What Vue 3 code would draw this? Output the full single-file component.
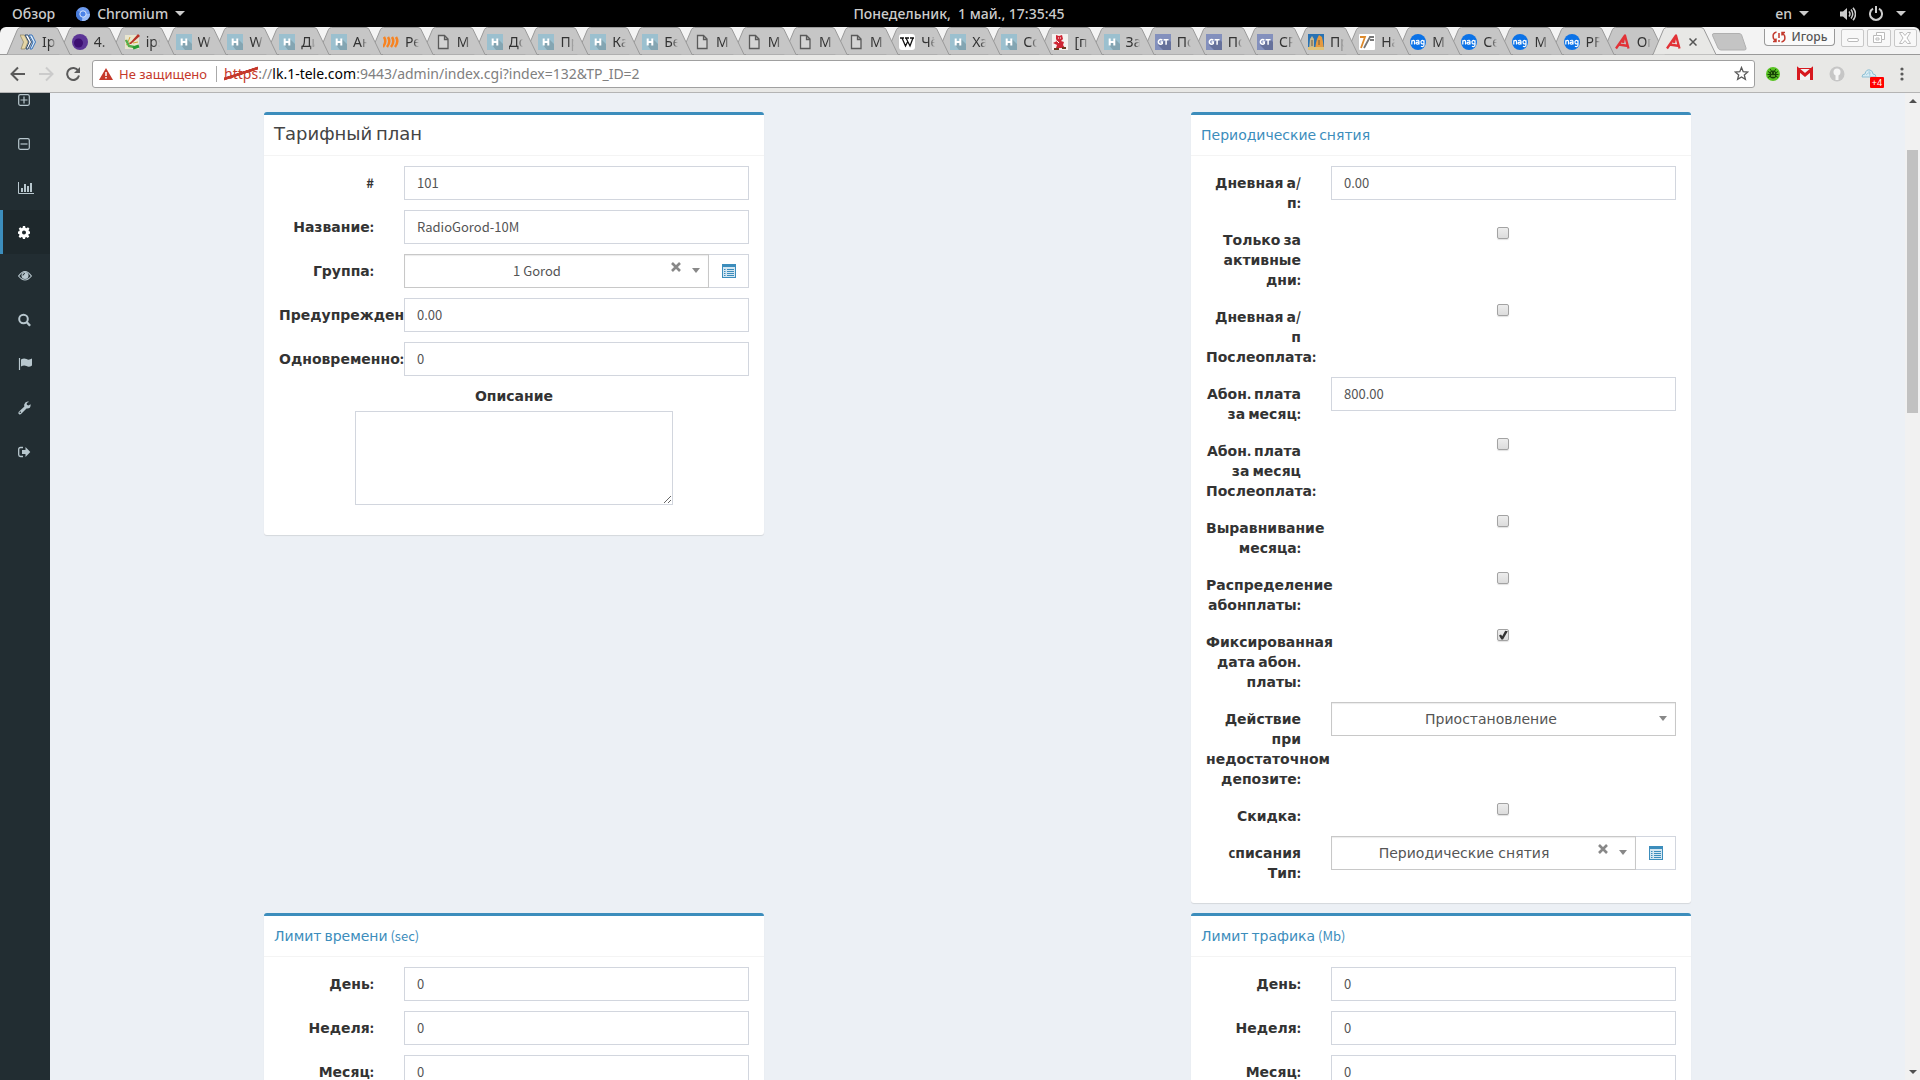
<script setup>
import { h } from 'vue'

/* Splits a string into Cyrillic and other runs: the two scripts use different families. */
const Mixed = (props) =>
  (props.text.match(/[\u0400-\u04ff]+|[^\u0400-\u04ff]+/g) || []).map((run) =>
    /[\u0400-\u04ff]/.test(run) ? run : h('span', { class: 'latin' }, run)
  )
Mixed.props = ['text']

const H = { icon: 'h' }
const tabs = [
  { icon: 'books', title: 'Ipt' }, { icon: 'orb', title: '4.' }, { icon: 'pen', title: 'ips' },
  { ...H, title: 'W' }, { ...H, title: 'W' }, { ...H, title: 'Ди' }, { ...H, title: 'Ан' },
  { icon: 'waves', title: 'Ре' }, { icon: 'doc', title: 'M' }, { ...H, title: 'До' },
  { ...H, title: 'Пр' }, { ...H, title: 'Ка' }, { ...H, title: 'Бе' },
  { icon: 'doc', title: 'M' }, { icon: 'doc', title: 'M' }, { icon: 'doc', title: 'M' }, { icon: 'doc', title: 'M' },
  { icon: 'wiki', title: 'Чё' }, { ...H, title: 'Ха' }, { ...H, title: 'Со' },
  { icon: 'devil', title: '[п' }, { ...H, title: 'За' },
  { icon: 'gt', title: 'По' }, { icon: 'gt', title: 'По' }, { icon: 'gt', title: 'СР' },
  { icon: 'castle', title: 'Пр' }, { icon: 'seven', title: 'На' },
  { icon: 'nag', title: 'M' }, { icon: 'nag', title: 'Се' }, { icon: 'nag', title: 'M' }, { icon: 'nag', title: 'PF' },
  { icon: 'abills', title: 'Оп' }, { icon: 'abills', title: '', active: true }
]

const favicons = {
  h: '<rect width="16" height="16" fill="#9bc0cf"/><path d="M5 11l6-6 5 5v6H9z" fill="#84a5b2"/><path d="M5.700 4.500v7M10.300 4.500v7M5.700 8h4.600" stroke="#fff" stroke-width="2" fill="none"/>',
  gt: '<rect width="16" height="16" fill="#8390bd"/><path d="M3 11l10-6 3 3v8H8z" fill="#66719b"/><path d="M7.300 6.300A2.300 2.300 0 1 0 7.300 9.500V8.100H5.600M8.600 5.800h5M11.100 5.800v5" stroke="#fff" stroke-width="1.500" fill="none"/>',
  doc: '<path d="M3.500 1.500h6l3.500 3.500v9.500h-9.500zM9.500 1.500v4h3.500" fill="#d4d4d4" stroke="#5a5a5a" stroke-width="1.300"/>',
  orb: '<circle cx="8" cy="8" r="8" fill="#5c3596"/><circle cx="6.500" cy="9" r="4.500" fill="#3d0f72"/>',
  books: '<path d="M0 1h4.500l3.500 7-3 7H1l2.500-7z" fill="#e5d6a6" stroke="#7c7251" stroke-width=".6"/><path d="M5 1h3l3.500 7-3.500 7H6l3-7z" fill="#fff" stroke="#2f4a6b"/><path d="M9 1h3l3.500 7-3.500 7h-2l3-7z" fill="#dceaf8" stroke="#3671b8"/>',
  pen: '<path d="M1 1h14v14H1z" fill="#e9e6cf"/><path d="M1 6l3 2 2-5M2 11l5-3M9 9l5-1" stroke="#d5a437" fill="none"/><path d="M2 6l3 6 5 1" stroke="#58ad4c" stroke-width="2.400" fill="none"/><path d="M5 10l9-10 2 2-9 8z" fill="#b83227"/><path d="M9 14l6-2" stroke="#279b33" stroke-width="3"/>',
  waves: '<path d="M1 3q3 5-1 10M5 3q3 5-1 10M9 3q3 5-1 10M13 3q3 5-1 10" stroke="#f78321" stroke-width="2.500" fill="none"/>',
  wiki: '<rect width="16" height="16" rx="3" fill="#fff"/><path d="M1 4h4M6 4h4M11 4h4M3 4l3.500 8L9 7M7 4l4 8 3-8" stroke="#111" stroke-width="1.300" fill="none"/>',
  devil: '<rect width="16" height="16" fill="#f4f1ef"/><path d="M4 1l3 1 3-1 1 4-2 2 3 1-1 3 2 3H4l1-3-4-2 4-2-1-2z" fill="#cf2634"/><path d="M2 14h5v2H2zM10 13h4v2h-4z" fill="#6c3b21"/><path d="M6 4h1M8 4h1M5 7l2 2" stroke="#fff"/>',
  castle: '<rect width="16" height="16" fill="#2872b4"/><path d="M2 5l2-3 2 3v10H1z" fill="#c6b891"/><path d="M9 5l2-4 3 2 1 5 1 8H7l1-7z" fill="#e59a3f"/><path d="M0 13h16v3H0z" fill="#dfc27a"/><path d="M4 6v6M11 6v5" stroke="#6b5b45"/>',
  seven: '<rect width="16" height="16" rx="1" fill="#fff"/><path d="M1 3h5L2 14" stroke="#dd8a2c" stroke-width="1.800" fill="none"/><path d="M15 3h-4L5 14M15 6h-4" stroke="#777" stroke-width="1.800" fill="none"/>',
  nag: '<circle cx="8" cy="8" r="8" fill="#0b72e7"/><path d="M1.800 10.500V6.300M1.800 7.500Q3.200 5.400 4.500 7v3.500M6 6.700Q9 5.400 9 7.700v2.800M9 8.200q-3-.2-3 1.200 1.500 1.800 3-.2M14 6.200v5Q13.500 13.200 10.900 12.200M14 7.500Q12 5.200 11 7.600 10.800 10.800 14 9.600" stroke="#fff" stroke-width="1.200" fill="none"/>',
  abills: '<path d="M1 14.500L10 1.500l3.500 13M3.500 10.500l10 1.500M9 3.500L8 9" stroke="#e23237" stroke-width="2.300" fill="none" stroke-linejoin="round"/>'
}

const menu = [
  { name: 'Добавить', art: '<rect x=".7" y="3.700" width="10.600" height="10.600" rx="1.500" fill="none" stroke="currentColor" stroke-width="1.200"/><path d="M2.500 9h7M6 5.500v7" stroke="currentColor" stroke-width="1.200"/>' },
  { name: 'Свернуть', art: '<rect x=".7" y="3.700" width="10.600" height="10.600" rx="1.500" fill="none" stroke="currentColor" stroke-width="1.200"/><path d="M2.500 9h7" stroke="currentColor" stroke-width="1.200"/>' },
  { name: 'Отчёты', art: '<path d="M.5 3v11.500H16" fill="none" stroke="currentColor"/><path d="M3 9h2v4H3zM6 5h2v8H6zM9 7h2v6H9zM12 4h2v9h-2z" fill="currentColor"/>' },
  { name: 'Настройка', active: true, art: '<path fill-rule="evenodd" fill="currentColor" d="M4.900 3h2.200l.3 1.700 1.100.5 1.500-1 1.500 1.600-1 1.400.5 1.100 1 .2v2.200l-1.300.3-.4 1.100 1 1.400-1.600 1.500-1.400-1-1 .4-.3 1.600H4.900l-.3-1.600-1.100-.4-1.400 1-1.500-1.600.9-1.300-.4-1.100L0 10.700V8.500l1.300-.3.4-1.100-1-1.400 1.500-1.500 1.500 1 .9-.4zM6 7.500a2 2 0 1 0 0 4 2 2 0 0 0 0-4z"/>' },
  { name: 'Мониторинг', art: '<path d="M.6 9Q7 0 13.400 9 7 17 .6 9z" fill="none" stroke="currentColor" stroke-width="1.200"/><circle cx="7" cy="8.500" r="3.500" fill="currentColor"/><path d="M5 8.500q0-2 2-2" stroke="#222d32" fill="none"/>' },
  { name: 'Поиск', art: '<circle cx="5.500" cy="8" r="4.300" fill="none" stroke="currentColor" stroke-width="2"/><path d="M8.800 11.300l3.300 3.500" stroke="currentColor" stroke-width="2.400"/>' },
  { name: 'Отметки', art: '<path d="M1.500 3v12" stroke="currentColor" stroke-width="1.200"/><path d="M3 4.500q3-2 5.500-.4 2.500 1.300 5.500-.6v7q-3 2-5.500.6-2.500-1.600-5.500.4z" fill="currentColor"/>' },
  { name: 'Инструменты', art: '<path d="M12.600 5.300l-2.200 1.300-1.600-.9V4l2.300-1.300Q7.500 1.800 6.300 5.200q-.3 1.300.1 2.300L.8 12.700q-1 1.500.3 2.500 1.200.6 2.200-.4l5.200-5.300q4.500.4 4.100-4.200zM2.300 14a.8.8 0 1 1 0-1.600.8.8 0 0 1 0 1.600z" fill="currentColor"/>' },
  { name: 'Выход', art: '<path d="M5 4.500H2.500Q.7 4.500.7 6.200v5.600q0 1.700 1.800 1.700H5" fill="none" stroke="currentColor" stroke-width="1.300"/><path d="M4 7h3.500V4L12.300 9l-4.800 5v-3H4z" fill="currentColor"/>' }
]

const tariff = [
  { id: 'tp-id', label: '#', type: 'text', value: '101' },
  { id: 'tp-name', label: 'Название:', type: 'text', value: 'RadioGorod-10M' },
  { id: 'tp-group', label: 'Группа:', type: 'select', value: '1 Gorod', latin: true, group: true },
  { id: 'tp-alert', label: 'Предупрежден', type: 'text', value: '0.00' },
  { id: 'tp-sim', label: 'Одновременно:', type: 'text', value: '0' }
]
const periodic = [
  { id: 'day-fee', label: 'Дневная а/п:', type: 'text', value: '0.00' },
  { id: 'active-day', label: 'Только за активные дни:', type: 'check' },
  { id: 'day-post', label: 'Дневная а/п Послеоплата:', type: 'check' },
  { id: 'month-fee', label: 'Абон. плата за месяц:', type: 'text', value: '800.00' },
  { id: 'month-post', label: 'Абон. плата за месяц Послеоплата:', type: 'check' },
  { id: 'month-align', label: 'Выравнивание месяца:', type: 'check' },
  { id: 'fee-split', label: 'Распределение абонплаты:', type: 'check' },
  { id: 'fixed-day', label: 'Фиксированная дата абон. платы:', type: 'check', checked: true },
  { id: 'small-deposit', label: 'Действие при недостаточном депозите:', type: 'select', value: 'Приостановление' },
  { id: 'reduction', label: 'Скидка:', type: 'check' },
  { id: 'fee-type', label: 'cписания Тип:', type: 'select', value: 'Периодические снятия', group: true }
]
const limits = (prefix) => [
  { id: prefix + '-day', label: 'День:', type: 'text', value: '0' },
  { id: prefix + '-week', label: 'Неделя:', type: 'text', value: '0' },
  { id: prefix + '-month', label: 'Месяц:', type: 'text', value: '0' }
]
const cards = [
  { title: 'Тарифный план', plain: true, fields: tariff, note: true, side: 'left' },
  { title: 'Периодические снятия', fields: periodic, side: 'right' },
  { title: 'Лимит времени (sec)', fields: limits('time'), side: 'left' },
  { title: 'Лимит трафика (Mb)', fields: limits('traffic'), side: 'right' }
]
</script>

<template>
  <div class="desktop">
    <header class="panel">
      <div class="panel-side">
        <span>Обзор</span>
        <span class="app-menu">
          <svg width="14" height="14" viewBox="0 0 14 14"><circle cx="7" cy="7" r="7" fill="#6d9bf0" /><path d="M7 7L1 3.500A7 7 0 0 0 6 14z" fill="#4579d8" /><path d="M7 7h7a7 7 0 0 1-8 7z" fill="#9cbdf8" /><circle cx="7" cy="7" r="3.200" fill="#4c83e8" stroke="#dbe7fd" /></svg>
          Chromium <i class="caret"></i>
        </span>
      </div>
      <time>Понедельник, &nbsp;1 май., 17:35:45</time>
      <div class="panel-side panel-right">
        <span class="lang">en <i class="caret"></i></span>
        <svg width="16" height="14" viewBox="0 0 16 14"><path d="M0 4.500h3L7 1v12L3 9.500H0z" fill="#ccc" /><path d="M9 4.500q2 2.500 0 5M11 2.500q3.500 4.500 0 9M13 .7q5 6.300 0 12.600" fill="none" stroke="#ccc" stroke-width="1.500" /></svg>
        <svg class="power" width="14" height="15" viewBox="0 0 14 15"><path d="M4 2.700A6 6 0 1 0 10 2.700M7 0v7" fill="none" stroke="#ccc" stroke-width="2" /></svg>
        <i class="caret"></i>
      </div>
    </header>

    <div class="strip">
      <div class="tabs">
        <div v-for="(t, i) in tabs" :key="i" class="tab" :class="{ active: t.active }" :style="{ zIndex: t.active ? 50 : 40 - i }">
          <svg class="shape" width="66" height="28" viewBox="0 0 66 28">
            <path d="M0 27.500L1 27.500 11.500 2.500Q12.500.5 14.500.5H49Q51 .5 52 2.500L64 27.500H66" />
          </svg>
          <svg class="fav" width="16" height="16" viewBox="0 0 16 16" v-html="favicons[t.icon]"></svg>
          <button v-if="t.active" class="tab-close" aria-label="Закрыть">
            <svg width="8" height="8" viewBox="0 0 8 8"><path d="M.5.5l7 7M7.500.5l-7 7" stroke="#555" stroke-width="1.500" /></svg>
          </button>
          <span v-else class="tab-title">{{ t.title }}</span>
        </div>
      </div>
      <div class="window-tools">
        <svg class="new-tab" width="36" height="18" viewBox="0 0 36 18"><path d="M3 .5h25q2 0 2.600 1.500L35 15q.5 2-1.500 2H10q-2 0-3-2L1.500 2.500Q1 .5 3 .5z" fill="#c4c4c4" stroke="#b0b0b0" /></svg>
        <button class="user">
          <svg width="14" height="12" viewBox="0 0 14 12"><path d="M4.500 1Q0 2 1.500 7.500L4 10.500M1 10.500h3V7.500M9.500 11q4.500-1 3-6.500L10 1.500M13 1.500h-3v3M7 2v5M7 9v2" fill="none" stroke="#c33a2e" stroke-width="1.500" /></svg>
          Игорь
        </button>
        <button class="win" aria-label="Свернуть"><svg width="12" height="12" viewBox="0 0 12 12"><rect x=".5" y="6.500" width="11" height="3" rx="1.500" /></svg></button>
        <button class="win" aria-label="Восстановить"><svg width="12" height="12" viewBox="0 0 12 12"><path d="M3.500.5h8v7h-3v3h-8v-7h3zM3.500 3.500h5v4M3 6h3v2H3z" /></svg></button>
        <button class="win" aria-label="Закрыть"><svg width="12" height="12" viewBox="0 0 12 12"><path d="M.5.5h3L6 3.500 8.500.5h3L8 6l3.500 5.500h-3L6 8.500l-2.500 3h-3L4 6z" /></svg></button>
      </div>
    </div>

    <div class="toolbar">
      <button class="nav" aria-label="Назад"><svg width="16" height="16" viewBox="0 0 16 16"><path d="M15 8H2M8 1.500L1.500 8 8 14.500" fill="none" stroke="#5a5a5a" stroke-width="2" /></svg></button>
      <button class="nav" aria-label="Вперёд"><svg width="16" height="16" viewBox="0 0 16 16"><path d="M1 8h13M8 1.500L14.500 8 8 14.500" fill="none" stroke="#cbcbcb" stroke-width="2" /></svg></button>
      <button class="nav" aria-label="Обновить"><svg width="14" height="16" viewBox="1 0 14 16"><path d="M13.300 4.800A6 6 0 1 0 14 9.500" fill="none" stroke="#5a5a5a" stroke-width="2" /><path d="M15 1v6H9z" fill="#5a5a5a" /></svg></button>
      <div class="omnibox">
        <svg width="14" height="12" viewBox="0 0 14 12"><path d="M7 0l7 12H0z" fill="#c5392b" /><path d="M7 4v4M7 9v1.500" stroke="#fff" stroke-width="1.500" /></svg>
        <span class="warn">Не защищено</span>
        <span class="url"><span class="scheme">https</span>://<b>lk.1-tele.com</b>:9443/admin/index.cgi?index=132&amp;TP_ID=2</span>
        <svg class="star" width="15" height="15" viewBox="0 0 15 15"><path d="M7.500 1.500l1.700 4.200 4.600.3-3.500 2.900 1.100 4.500-3.900-2.500-3.900 2.500 1.100-4.500L1.200 6l4.600-.3z" fill="none" stroke="#5a5a5a" stroke-width="1.300" /></svg>
      </div>
      <div class="extensions">
        <svg width="16" height="16" viewBox="0 0 16 16"><circle cx="8" cy="8" r="7" fill="#57c322" /><ellipse cx="8" cy="8.500" rx="3.500" ry="4" fill="#164306" /><path d="M3 5.500l10 6M3 11.500l10-6M2.500 8.500h11M5 3l1.500 2M11 3L9.500 5" stroke="#164306" /><path d="M6 7h1M9 7h1M6 10h4" stroke="#8bea44" /></svg>
        <svg width="16" height="16" viewBox="0 0 16 16"><path d="M0 2h16v12H0z" fill="#f2f2f2" /><path d="M0 2h16v1H0z" fill="#d7191f" /><path d="M1.500 14V3.500L8 9l6.500-5.500V14" fill="none" stroke="#d7191f" stroke-width="3" /></svg>
        <svg width="16" height="16" viewBox="0 0 16 16"><circle cx="8" cy="8" r="7.500" fill="#c6c6c6" /><circle cx="8" cy="6" r="3.500" fill="#f5f5f5" /><path d="M6.500 8h3v6h-3z" fill="#f5f5f5" /></svg>
        <span class="cloud">
          <svg width="16" height="16" viewBox="0 0 16 16"><path d="M1 11q0-3 3-3 1-5 5-4 3 1 3 4 3 0 3 3z" fill="#d7ecf5" stroke="#8fbfd3" /><path d="M5 9q2-3 5-2M8 5l1 5" stroke="#a6cfe0" fill="none" /></svg>
          <span class="badge">+4</span>
        </span>
        <svg width="4" height="14" viewBox="0 0 4 14" fill="#5a5a5a"><circle cx="2" cy="2" r="1.600" /><circle cx="2" cy="7" r="1.600" /><circle cx="2" cy="12" r="1.600" /></svg>
      </div>
    </div>

    <div class="page">
      <nav class="sidebar">
        <ul>
          <li v-for="m in menu" :key="m.name" :class="{ active: m.active }">
            <a href="#" :aria-label="m.name"><svg width="16" height="18" viewBox="0 0 16 18" v-html="m.art"></svg></a>
          </li>
        </ul>
      </nav>

      <main class="content">
        <form class="board" @submit.prevent>
          <section v-for="c in cards" :key="c.title" class="card" :class="c.side">
            <h3 v-if="c.plain" class="card-head"><Mixed :text="c.title" /></h3>
            <h3 v-else class="card-head link"><a href="#"><Mixed :text="c.title" /></a></h3>
            <div class="card-body">
              <div v-for="f in c.fields" :key="f.id" class="row">
                <label :for="f.id"><Mixed :text="f.label" /></label>
                <input v-if="f.type === 'text'" :id="f.id" class="control" type="text" :value="f.value" />
                <input v-else-if="f.type === 'check'" :id="f.id" class="tick" type="checkbox" :checked="f.checked" />
                <div v-else class="chooser" :class="{ grouped: f.group }">
                  <div class="select-box">
                    <select :id="f.id" :class="{ small: f.latin }"><option>{{ f.value }}</option></select>
                    <svg v-if="f.group" class="clear" width="10" height="10" viewBox="0 0 10 10"><path d="M1 1l8 8M9 1L1 9" stroke="#888" stroke-width="2.600" /></svg>
                    <i class="arrow"></i>
                  </div>
                  <button v-if="f.group" class="list" type="button" aria-label="Список">
                    <svg width="14" height="14" viewBox="0 0 14 14"><rect x=".5" y=".5" width="13" height="13" fill="#d5e7f2" stroke="#3c8dbc" /><path d="M0 0h14v3H0z" fill="#3c8dbc" /><path d="M2 5.500h1.500M2 7.500h1.500M2 9.500h1.500M2 11.500h1.500M5 5.500h7M5 7.500h7M5 9.500h7M5 11.500h7" stroke="#3c8dbc" /></svg>
                  </button>
                </div>
              </div>
              <div v-if="c.note" class="note">
                <label for="comments">Описание</label>
                <textarea id="comments"></textarea>
              </div>
            </div>
          </section>
        </form>
      </main>

      <div class="scrollbar">
        <i class="up"></i>
        <div class="track"><div class="thumb"></div></div>
        <i class="down"></i>
      </div>
    </div>
  </div>
</template>

<style>
body {
  margin: 0;
}
.latin {
  font-family: "Noto Sans CJK SC", sans-serif;
  font-size: 13px;
  line-height: 0;
}
h3 > .latin {
  font-size: 17px;
}
</style>

<style scoped>
* {
  box-sizing: border-box;
}
button {
  padding: 0;
  border: 0;
  background: none;
  font: inherit;
}
svg {
  display: block;
  flex: none;
}
.desktop {
  display: flex;
  flex-direction: column;
  height: 100vh;
  overflow: hidden;
  background: #000;
  font-family: "Noto Sans", sans-serif;
}

/* system panel */
.panel {
  display: flex;
  flex: none;
  align-items: center;
  height: 27px;
  padding: 0 14px 0 12px;
  color: #ccc;
  font-size: 14px;
  font-weight: 500;
  line-height: 20px;
}
.panel-side {
  display: flex;
  flex: 1;
  align-items: center;
  gap: 21px;
}
.panel-right {
  justify-content: flex-end;
  gap: 13px;
}
.app-menu,
.lang {
  display: flex;
  align-items: center;
  gap: 7px;
}
.lang {
  margin-right: 18px;
}
.caret {
  border: 5px solid transparent;
  border-top-color: #ccc;
  border-bottom: 0;
}

/* tab strip */
.strip {
  display: flex;
  flex: none;
  height: 28px;
  padding-left: 6px;
  border-radius: 6px 6px 0 0;
  background: #f3f3f3;
  box-shadow: inset 0 -1px #999;
}
.tabs {
  display: flex;
  flex: 1;
  min-width: 0;
}
.tab {
  position: relative;
  display: flex;
  flex: 51 1 0;
  min-width: 0;
  padding: 7px 0 0 14px;
}
.tab:nth-child(-n + 14) {
  flex-grow: 52;
}
.tab > * {
  flex: none;
}
.shape {
  position: absolute;
  top: 0;
  left: 0;
}
.shape path {
  fill: #c6c6c6;
  stroke: #999;
}
.active .shape path {
  fill: #e8e8e6;
}
.fav {
  position: relative;
}
.tab-title {
  position: relative;
  width: 14px;
  height: 20px;
  margin: -2px 0 0 6px;
  overflow: hidden;
  color: #333;
  font-size: 14px;
  line-height: 20px;
  white-space: nowrap;
  mask-image: linear-gradient(90deg, #000 60%, transparent);
}
.tab-close {
  position: relative;
  height: 16px;
  margin-left: 7px;
}
.window-tools {
  display: flex;
  flex: none;
  align-items: flex-start;
  width: 217px;
  padding: 2px 3px 0 8px;
  gap: 3px;
}
.new-tab {
  margin: 4px 14px 0 0;
}
.user {
  display: flex;
  align-items: center;
  justify-content: center;
  gap: 6px;
  width: 71px;
  height: 17px;
  margin-right: 3px;
  border: 1px solid #999;
  border-top: 0;
  border-radius: 0 0 4px 4px;
  background: #fafafa;
  color: #555;
  font-size: 12px;
  font-weight: 500;
  line-height: 16px;
}
.win {
  display: flex;
  flex: 1;
  align-items: center;
  justify-content: center;
  height: 18px;
  border: 1px solid #c8c8c8;
  border-radius: 2px;
  background: #f8f8f8;
}
.win svg {
  fill: #fff;
  stroke: #bbb;
}

/* toolbar */
.toolbar {
  display: flex;
  flex: none;
  align-items: center;
  height: 38px;
  padding: 0 16px 0 10px;
  border-bottom: 1px solid #b4b4b4;
  background: #e8e8e6;
}
.nav {
  margin-right: 12px;
}
.omnibox {
  display: flex;
  flex: 1;
  align-items: center;
  height: 28px;
  margin-right: 10px;
  padding: 0 5px 0 6px;
  border: 1px solid #a0a0a0;
  border-radius: 3px;
  background: #fff;
  font-size: 14px;
  line-height: 20px;
}
.warn {
  margin: 0 7px 0 6px;
  padding-right: 9px;
  border-right: 1px solid #aaa;
  color: #c5392b;
  font-size: 13px;
  line-height: 16px;
}
.url {
  flex: 1;
  color: #808080;
}
.url b {
  color: #000;
  font-weight: 400;
}
.scheme {
  background: linear-gradient(162deg, transparent 44%, #c5392b 46%, #c5392b 54%, transparent 56%);
  color: #c5392b;
}
.extensions {
  display: flex;
  align-items: center;
  gap: 16px;
}
.cloud {
  position: relative;
  margin-right: 7px;
}
.badge {
  position: absolute;
  top: 11px;
  left: 9px;
  width: 14px;
  border-radius: 1px;
  background: #f00;
  color: #fff;
  font-size: 9px;
  line-height: 11px;
  text-align: center;
}

/* page */
.page {
  display: flex;
  flex: 1;
  min-height: 0;
  background: #ecf0f5;
}
.sidebar {
  flex: none;
  width: 50px;
  overflow: hidden;
  background: #222d32;
}
.sidebar ul {
  margin: -15px 0 0;
  padding: 0;
  list-style: none;
}
.sidebar a {
  display: flex;
  align-items: center;
  height: 44px;
  padding-left: 15px;
  border-left: 3px solid transparent;
  color: #b8c7ce;
}
.sidebar .active a {
  border-color: #3c8dbc;
  background: #1e282c;
  color: #fff;
}
.content {
  flex: 1;
  min-width: 0;
  overflow: hidden;
}
.board {
  display: grid;
  grid-template-columns: 214fr 500fr 427fr 500fr 214fr;
  align-items: start;
  row-gap: 10px;
  padding-top: 19px;
}
.card {
  border-top: 3px solid #3c8dbc;
  border-radius: 3px;
  background: #fff;
  box-shadow: 0 1px 1px rgba(0, 0, 0, 0.1);
  color: #333;
  font-family: "DejaVu Sans", sans-serif;
  font-size: 14px;
  line-height: 20px;
}
.left {
  grid-column: 2;
}
.right {
  grid-column: 4;
}
.card-head {
  height: 41px;
  margin: 0;
  padding: 8px 10px;
  border-bottom: 1px solid #f4f4f4;
  color: #444;
  font-size: 18px;
  font-weight: 400;
  line-height: 22px;
}
.link {
  padding-top: 9px;
  font-size: 14px;
}
.link a {
  color: #3c8dbc;
  text-decoration: none;
}
.card-body {
  padding: 10px 15px;
}
.row {
  display: grid;
  grid-template-columns: minmax(0, 95fr) minmax(0, 345fr);
  align-items: start;
  column-gap: 30px;
  margin-bottom: 10px;
}
label {
  font-weight: 700;
}
.row label {
  padding-top: 7px;
  text-align: right;
}
.control {
  width: 100%;
  height: 34px;
  padding: 5px 12px 7px;
  border: 1px solid #d2d6de;
  border-radius: 0;
  background: #fff;
  color: #555;
  font-family: "Noto Sans CJK SC", sans-serif;
  font-size: 13px;
  line-height: 20px;
}
.tick {
  position: relative;
  justify-self: center;
  width: 12px;
  height: 12px;
  margin: 4px 1px 0 0;
  border: 1px solid #a3a3a3;
  border-radius: 2px;
  appearance: none;
  background: linear-gradient(#ededed, #dcdcdc);
  box-shadow: 0 1px 1px rgba(0, 0, 0, 0.12);
}
.tick:checked::after {
  position: absolute;
  inset: 0;
  background: #333;
  clip-path: polygon(10% 55%, 30% 45%, 42% 62%, 72% 8%, 98% 12%, 50% 96%, 34% 96%);
  content: "";
}
.chooser {
  display: flex;
}
.select-box {
  position: relative;
  flex: 1;
}
select {
  display: block;
  width: 100%;
  height: 34px;
  padding: 0 36px 0 11px;
  border: 1px solid #c8c8c8;
  border-radius: 0;
  appearance: none;
  background: #fff;
  box-shadow: inset 0 1px 1px rgba(0, 0, 0, 0.08);
  color: #555;
  font-family: "DejaVu Sans", sans-serif;
  font-size: 14px;
  text-align: center;
  text-align-last: center;
}
.grouped select {
  padding-right: 50px;
}
select.small {
  padding-bottom: 2px;
  font-family: "Noto Sans CJK SC", sans-serif;
  font-size: 13px;
}
.arrow {
  position: absolute;
  top: 14px;
  right: 9px;
  border: 4px solid transparent;
  border-top: 5px solid #888;
  border-bottom: 0;
}
.clear {
  position: absolute;
  top: 8px;
  right: 28px;
}
.list {
  display: flex;
  flex: none;
  align-items: center;
  justify-content: center;
  width: 40px;
  height: 34px;
  border: 1px solid #d2d6de;
  border-left: 0;
  background: #fff;
}
.note {
  display: flex;
  flex-direction: column;
  align-items: center;
  gap: 5px;
  padding-bottom: 20px;
}
textarea {
  display: block;
  width: 100%;
  max-width: 318px;
  height: 94px;
  border: 1px solid #d2d6de;
  border-radius: 0;
  background: #fff;
}

/* scrollbar */
.scrollbar {
  display: flex;
  flex: none;
  flex-direction: column;
  align-items: center;
  width: 15px;
  padding: 6px 0;
  background: #f1f1f1;
}
.up,
.down {
  border: 4px solid transparent;
}
.up {
  border-top: 0;
  border-bottom: 4px solid #505050;
}
.down {
  border-top: 4px solid #505050;
  border-bottom: 0;
}
.track {
  display: grid;
  flex: 1;
  grid-template-rows: 47fr 263fr 657fr;
  width: 11px;
}
.thumb {
  grid-row: 2;
  background: #c1c1c1;
}
</style>
